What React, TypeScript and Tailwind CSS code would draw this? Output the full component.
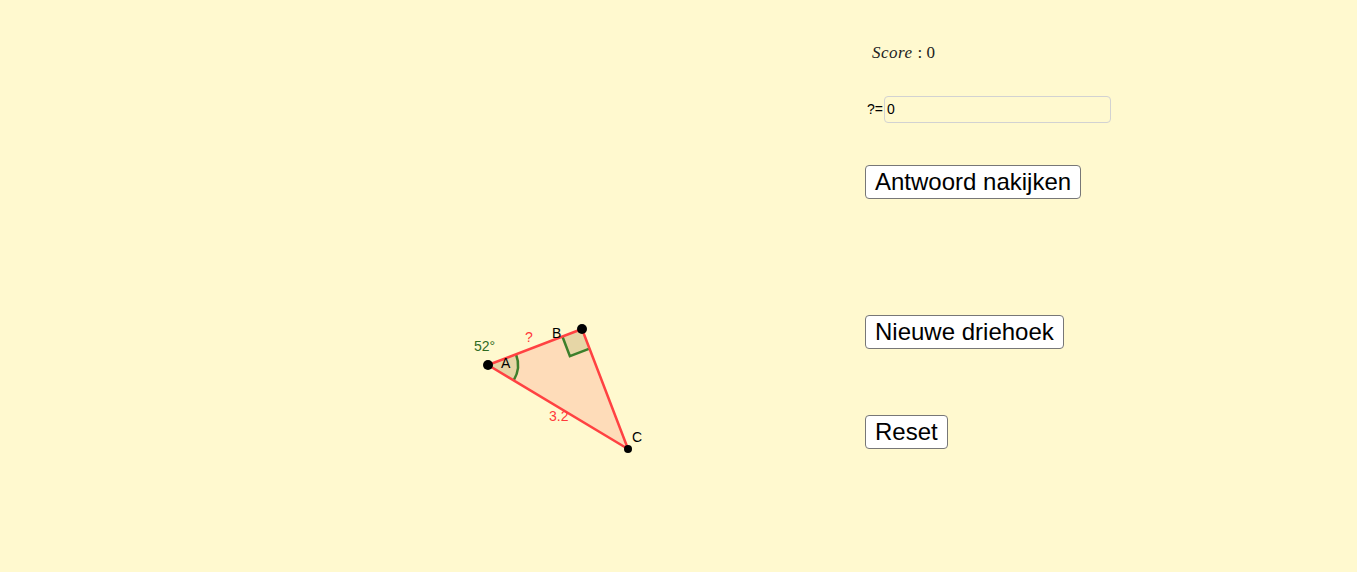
import React from 'react';

const A = { x: 488, y: 365 };
const B = { x: 582, y: 329 };
const C = { x: 628, y: 449 };

const Triangle: React.FC = () => (
  <svg
    width={200}
    height={160}
    viewBox="460 310 200 160"
    className="block"
    style={{ fontFamily: '"Liberation Sans", Arial, sans-serif' }}
  >
    <polygon
      points={`${A.x},${A.y} ${B.x},${B.y} ${C.x},${C.y}`}
      fill="#fedcb9"
      stroke="none"
    />
    {/* angle at A */}
    <path d="M488 365 L516 354.3 A30 30 0 0 1 513.7 380.4 Z" fill="#e6d6a6" stroke="none" />
    <path d="M516 354.3 A30 30 0 0 1 513.7 380.4" fill="none" stroke="#3d7f2b" strokeWidth={2.5} />
    {/* right angle at B */}
    <polygon points="582,329 562.4,336.5 569.9,356.1 589.5,348.6" fill="#e6d6a6" />
    <polyline points="562.4,336.5 569.9,356.1 589.5,348.6" fill="none" stroke="#3d7f2b" strokeWidth={2.5} />
    <polygon
      points={`${A.x},${A.y} ${B.x},${B.y} ${C.x},${C.y}`}
      fill="none"
      stroke="#ff4242"
      strokeWidth={2.5}
      strokeLinejoin="round"
    />
    <circle cx={A.x} cy={A.y} r={5} fill="#000" />
    <circle cx={B.x} cy={B.y} r={5} fill="#000" />
    <circle cx={C.x} cy={C.y} r={4} fill="#000" />
    <text x={474} y={351} fontSize={14} fill="#2f6b1f">52°</text>
    <text x={525} y={342} fontSize={14} fill="#ff3b3b">?</text>
    <text x={552} y={338} fontSize={14} fill="#000">B</text>
    <text x={501} y={368} fontSize={14} fill="#000">A</text>
    <text x={549} y={421} fontSize={14} fill="#ff3b3b">3.2</text>
    <text x={632} y={442} fontSize={14} fill="#000">C</text>
  </svg>
);

const btn =
  'h-[34px] px-[9px] bg-white border border-[#777] rounded-[4px] text-[24px] leading-none text-black font-["Liberation_Sans",Arial,sans-serif]';

export default function App() {
  return (
    <div className="w-full h-[572px] bg-[#fff9cf] flex overflow-hidden">
      <div className="w-[865px] shrink-0 pl-[460px] pt-[310px]">
        <Triangle />
      </div>
      <div className="flex flex-col items-start">
        <div className="mt-[43px] ml-[7px] h-[20px] flex items-center text-[17px] text-[#222] font-['Liberation_Serif','DejaVu_Serif',serif]">
          <span className="italic tracking-[0.5px]">Score</span>
          <span className="ml-[5px]">: 0</span>
        </div>
        <div className="mt-[33px] ml-[2px] flex items-center font-['Liberation_Sans',Arial,sans-serif] text-[14px] text-black">
          <span>?=</span>
          <div className="ml-[1px] w-[227px] h-[27px] border border-[#d2d2d2] rounded-[4px] flex items-center px-[2px]">
            0
          </div>
        </div>
        <button className={`${btn} mt-[42px]`}>Antwoord nakijken</button>
        <button className={`${btn} mt-[116px]`}>Nieuwe driehoek</button>
        <button className={`${btn} mt-[66px]`}>Reset</button>
      </div>
    </div>
  );
}
